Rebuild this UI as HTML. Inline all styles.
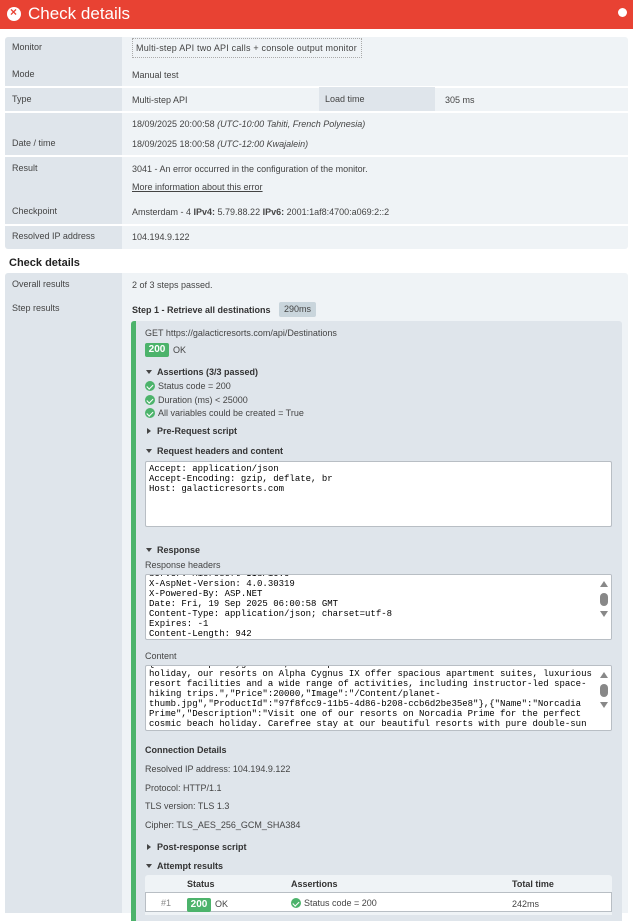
<!DOCTYPE html>
<html><head><meta charset="utf-8"><style>
*{margin:0;padding:0;box-sizing:border-box}
body{width:633px;height:904px;overflow:hidden;background:#fff;font-family:"Liberation Sans",sans-serif;font-size:9px;color:#444;position:relative}
.a{position:absolute;white-space:nowrap}
.hdr{position:absolute;left:0;top:0;width:633px;height:29px;background:#e84233}
.lab{background:#dfe5eb}
.val{background:#eff3f6}
.mono{font-family:"Liberation Mono",monospace;font-size:9px;line-height:10px;color:#000;white-space:pre}
.ta{position:absolute;background:#fff;border:1px solid #b8bec4;border-radius:2px;overflow:hidden}
.b{font-weight:bold;color:#333}
.chk{display:inline-block;width:10px;height:10px;border-radius:50%;background:#4cb36b;vertical-align:-2px;margin-right:3px;position:relative}
.chk:after{content:"";position:absolute;left:3px;top:1.5px;width:2.5px;height:5px;border:solid #fff;border-width:0 1.5px 1.5px 0;transform:rotate(45deg)}
.tri{display:inline-block;width:0;height:0;border-left:3px solid transparent;border-right:3px solid transparent;border-top:4px solid #444;margin-right:5px;vertical-align:1px}
.trr{display:inline-block;width:0;height:0;border-top:3px solid transparent;border-bottom:3px solid transparent;border-left:4px solid #444;margin-right:6px;margin-left:1px;vertical-align:0px}
.sb{position:absolute;right:0;top:0;width:14px;height:100%;background:#fff}
</style></head><body>
<div class="hdr"></div>
<div class="a" style="left:7px;top:7px;width:14px;height:14px;border-radius:50%;background:#fff"></div>
<div class="a" style="left:10px;top:5px;color:#e84233;font-weight:bold;font-size:12px">×</div>
<div class="a" style="left:28px;top:4px;color:#fff;font-size:17px">Check details</div>
<div class="a" style="left:618px;top:8px;width:9px;height:9px;border-radius:50%;background:#fff"></div>

<div class="a lab" style="left:5px;top:37px;width:117px;height:212px;border-radius:3px 0 0 3px"></div>
<div class="a val" style="left:122px;top:37px;width:506px;height:212px;border-radius:0 3px 3px 0"></div>
<div class="a" style="left:5px;top:86px;width:623px;height:1.5px;background:#fff"></div>
<div class="a" style="left:5px;top:111px;width:623px;height:1.5px;background:#fff"></div>
<div class="a" style="left:5px;top:155px;width:623px;height:1.5px;background:#fff"></div>
<div class="a" style="left:5px;top:224px;width:623px;height:1.5px;background:#fff"></div>
<div class="a lab" style="left:319px;top:87px;width:116px;height:24px"></div>
<div class="a" style="left:12px;top:42px">Monitor</div>
<div class="a" style="left:132px;top:38px;width:230px;height:20px;border:1px dotted #aaa"></div>
<div class="a" style="left:136px;top:43px;letter-spacing:0.2px">Multi-step API two API calls + console output monitor</div>
<div class="a" style="left:12px;top:69px">Mode</div>
<div class="a" style="left:132px;top:70px">Manual test</div>
<div class="a" style="left:12px;top:94px">Type</div>
<div class="a" style="left:132px;top:95px">Multi-step API</div>
<div class="a" style="left:325px;top:94px">Load time</div>
<div class="a" style="left:445px;top:95px">305 ms</div>
<div class="a" style="left:12px;top:138px">Date / time</div>
<div class="a" style="left:132px;top:119px">18/09/2025 20:00:58 <i>(UTC-10:00 Tahiti, French Polynesia)</i></div>
<div class="a" style="left:132px;top:139px">18/09/2025 18:00:58 <i>(UTC-12:00 Kwajalein)</i></div>
<div class="a" style="left:12px;top:163px">Result</div>
<div class="a" style="left:132px;top:164px">3041 - An error occurred in the configuration of the monitor.</div>
<div class="a" style="left:132px;top:182px;text-decoration:underline">More information about this error</div>
<div class="a" style="left:12px;top:206px">Checkpoint</div>
<div class="a" style="left:132px;top:207px">Amsterdam - 4 <b>IPv4:</b> 5.79.88.22 <b>IPv6:</b> 2001:1af8:4700:a069:2::2</div>
<div class="a" style="left:12px;top:231px">Resolved IP address</div>
<div class="a" style="left:132px;top:232px">104.194.9.122</div>

<div class="a b" style="left:9px;top:257px;font-size:11px;color:#222">Check details</div>

<div class="a lab" style="left:5px;top:273px;width:117px;height:640px;border-radius:3px 0 0 0"></div>
<div class="a val" style="left:122px;top:273px;width:506px;height:640px;border-radius:0 3px 0 0"></div>
<div class="a" style="left:12px;top:279px">Overall results</div>
<div class="a" style="left:132px;top:280px">2 of 3 steps passed.</div>
<div class="a" style="left:12px;top:303px">Step results</div>
<div class="a b" style="left:132px;top:305px">Step 1 - Retrieve all destinations</div>
<div class="a" style="left:279px;top:302px;width:37px;height:15px;background:#c9d5dc;border-radius:2px;text-align:center;line-height:15px">290ms</div>

<div class="a lab" style="left:131px;top:321px;width:491px;height:600px;border-left:5px solid #4cb36b;border-radius:3px 3px 0 0"></div>
<div class="a" style="left:145px;top:328px">GET https://galacticresorts.com/api/Destinations</div>
<div class="a" style="left:145px;top:343px;width:24px;height:14px;background:#4cb36b;color:#fff;font-weight:bold;border-radius:2px;text-align:center;line-height:14px;font-size:10px">200</div>
<div class="a" style="left:173px;top:345px">OK</div>
<div class="a b" style="left:146px;top:367px"><span class="tri"></span>Assertions (3/3 passed)</div>
<div class="a" style="left:145px;top:381px"><span class="chk"></span>Status code = 200</div>
<div class="a" style="left:145px;top:395px"><span class="chk"></span>Duration (ms) &lt; 25000</div>
<div class="a" style="left:145px;top:408px"><span class="chk"></span>All variables could be created = True</div>
<div class="a b" style="left:146px;top:426px"><span class="trr"></span>Pre-Request script</div>
<div class="a b" style="left:146px;top:446px"><span class="tri"></span>Request headers and content</div>
<div class="ta" style="left:145px;top:461px;width:467px;height:66px"><div class="mono" style="padding:2px 3px">Accept: application/json
Accept-Encoding: gzip, deflate, br
Host: galacticresorts.com</div></div>

<div class="a b" style="left:146px;top:545px"><span class="tri"></span>Response</div>
<div class="a" style="left:145px;top:560px">Response headers</div>
<div class="ta" style="left:145px;top:574px;width:467px;height:66px"><div class="mono" style="padding:0 3px;margin-top:-6px">Server: Microsoft-IIS/10.0
X-AspNet-Version: 4.0.30319
X-Powered-By: ASP.NET
Date: Fri, 19 Sep 2025 06:00:58 GMT
Content-Type: application/json; charset=utf-8
Expires: -1
Content-Length: 942</div><div class="sb"><div style="position:absolute;left:3px;top:6px;border-left:4px solid transparent;border-right:4px solid transparent;border-bottom:6px solid #888"></div><div style="position:absolute;left:3px;top:18px;width:8px;height:13px;border-radius:4px;background:#888"></div><div style="position:absolute;left:3px;top:36px;border-left:4px solid transparent;border-right:4px solid transparent;border-top:6px solid #888"></div></div></div>

<div class="a" style="left:145px;top:651px">Content</div>
<div class="ta" style="left:145px;top:665px;width:467px;height:66px"><div class="mono" style="padding:0 3px;margin-top:-7px">{"Name":"Alpha Cygnus IX","Description":"Select for an adventurous summer
holiday, our resorts on Alpha Cygnus IX offer spacious apartment suites, luxurious
resort facilities and a wide range of activities, including instructor-led space-
hiking trips.","Price":20000,"Image":"/Content/planet-
thumb.jpg","ProductId":"97f8fcc9-11b5-4d86-b208-ccb6d2be35e8"},{"Name":"Norcadia
Prime","Description":"Visit one of our resorts on Norcadia Prime for the perfect
cosmic beach holiday. Carefree stay at our beautiful resorts with pure double-sun</div><div class="sb"><div style="position:absolute;left:3px;top:6px;border-left:4px solid transparent;border-right:4px solid transparent;border-bottom:6px solid #888"></div><div style="position:absolute;left:3px;top:18px;width:8px;height:13px;border-radius:4px;background:#888"></div><div style="position:absolute;left:3px;top:36px;border-left:4px solid transparent;border-right:4px solid transparent;border-top:6px solid #888"></div></div></div>

<div class="a b" style="left:145px;top:745px">Connection Details</div>
<div class="a" style="left:145px;top:764px">Resolved IP address: 104.194.9.122</div>
<div class="a" style="left:145px;top:783px">Protocol: HTTP/1.1</div>
<div class="a" style="left:145px;top:801px">TLS version: TLS 1.3</div>
<div class="a" style="left:145px;top:820px">Cipher: TLS_AES_256_GCM_SHA384</div>
<div class="a b" style="left:146px;top:842px"><span class="trr"></span>Post-response script</div>
<div class="a b" style="left:146px;top:861px"><span class="tri"></span>Attempt results</div>
<div class="a" style="left:145px;top:875px;width:467px;height:40px;background:#eff3f6;border-radius:3px 3px 0 0"></div>
<div class="a b" style="left:187px;top:879px">Status</div>
<div class="a b" style="left:291px;top:879px">Assertions</div>
<div class="a b" style="left:512px;top:879px">Total time</div>
<div class="a" style="left:145px;top:892px;width:467px;height:20px;background:#fff;border:1px solid #b8bec4"></div>
<div class="a" style="left:161px;top:898px;color:#888">#1</div>
<div class="a" style="left:187px;top:898px;width:24px;height:14px;background:#4cb36b;color:#fff;font-weight:bold;border-radius:2px;text-align:center;line-height:14px;font-size:10px">200</div>
<div class="a" style="left:215px;top:899px">OK</div>
<div class="a" style="left:291px;top:898px"><span class="chk"></span>Status code = 200</div>
<div class="a" style="left:512px;top:899px">242ms</div>
</body></html>
